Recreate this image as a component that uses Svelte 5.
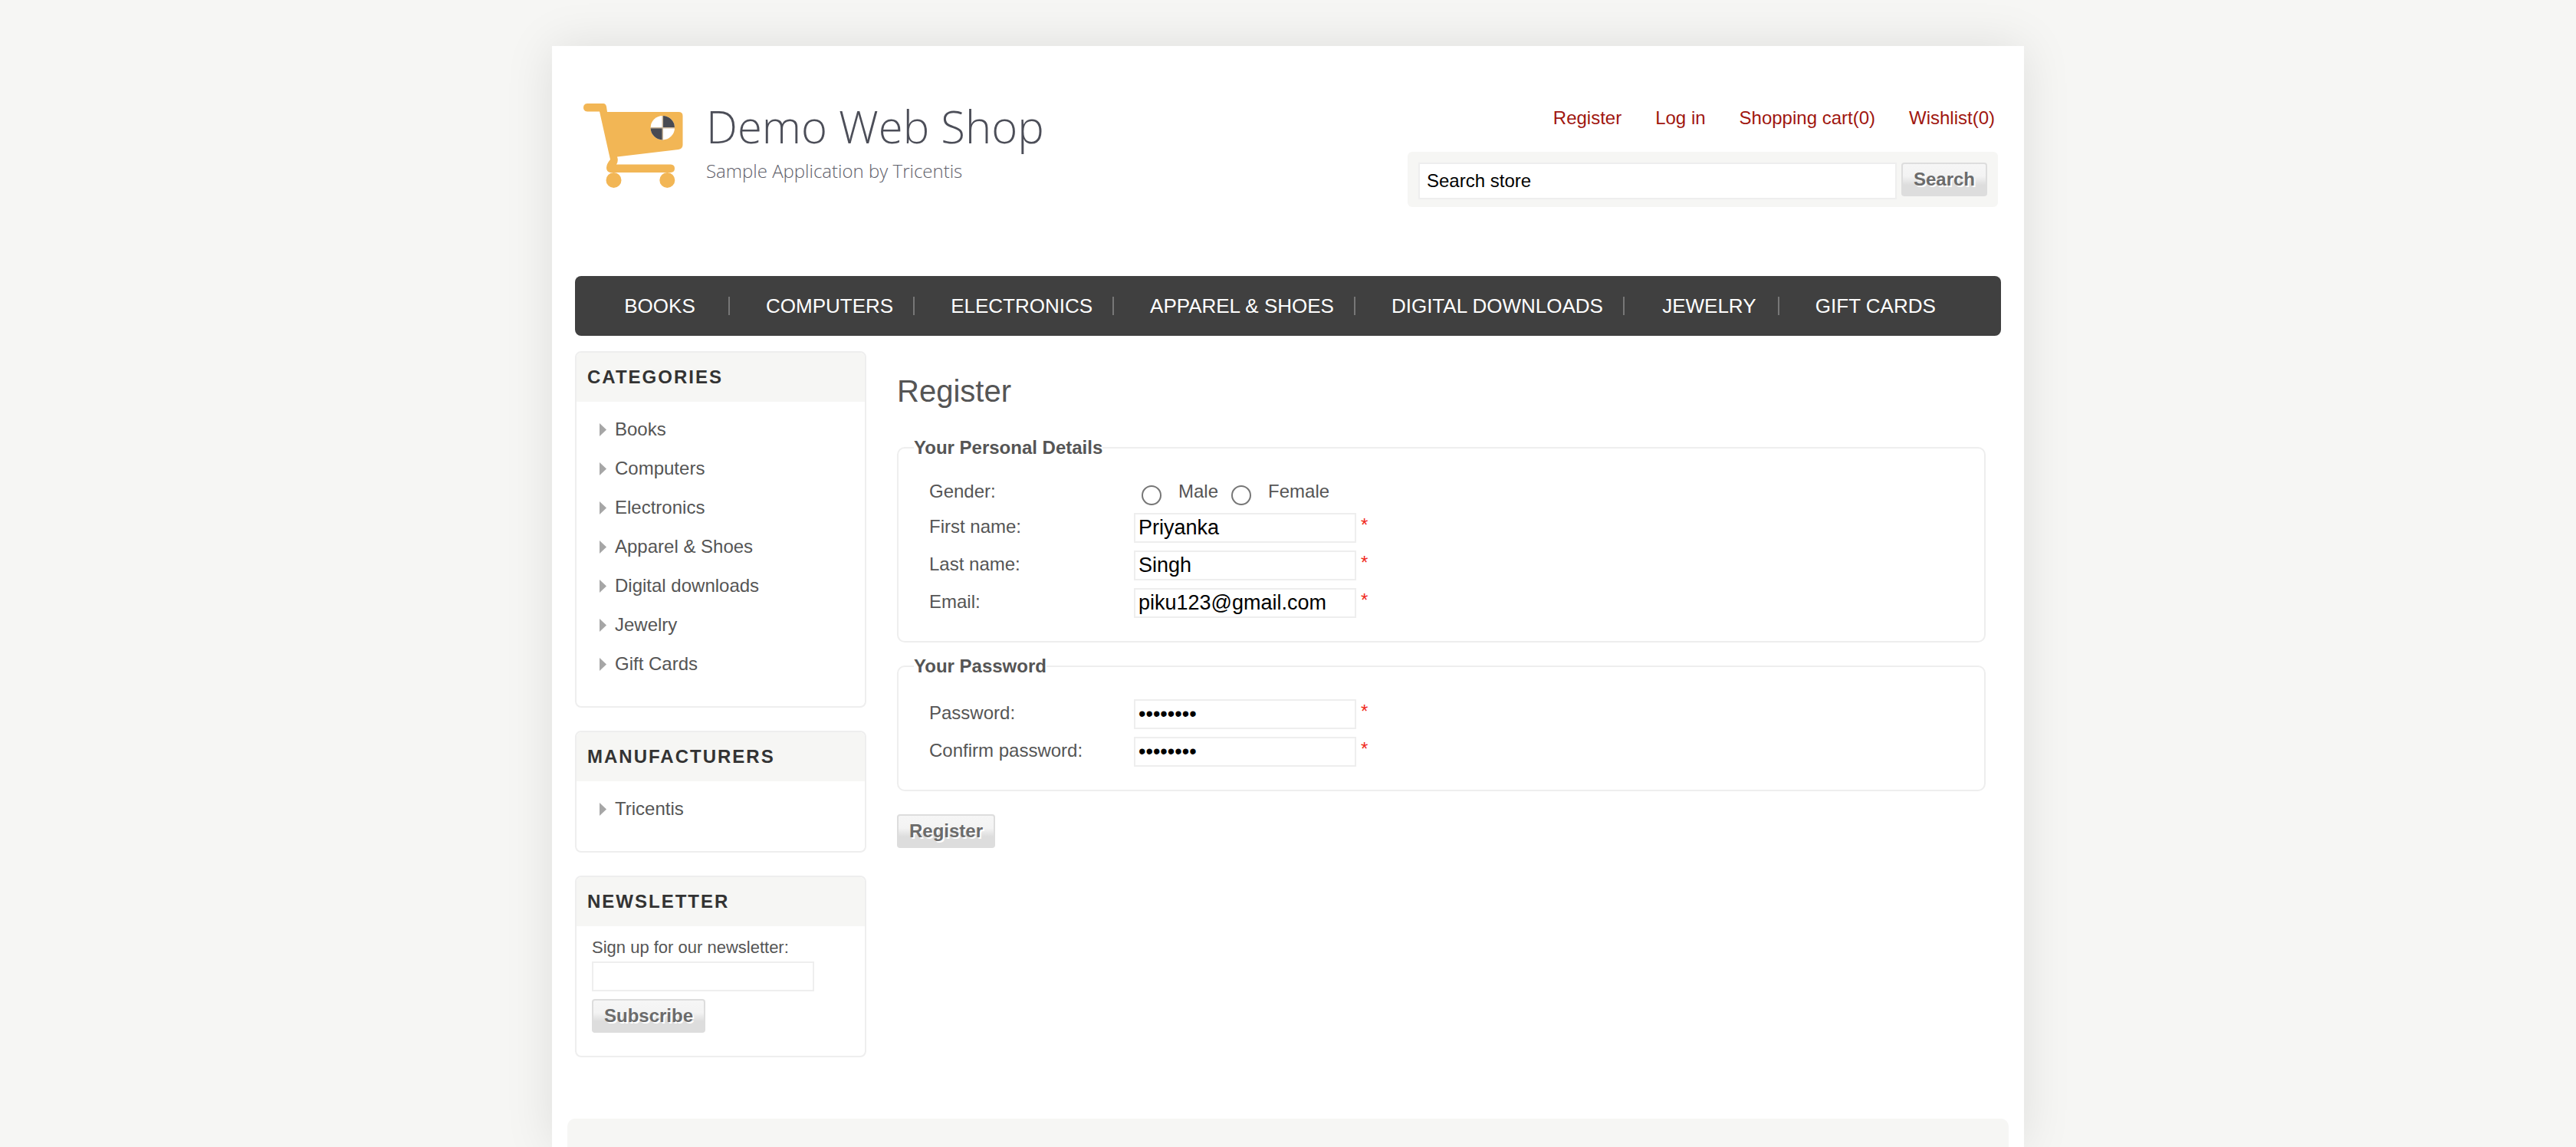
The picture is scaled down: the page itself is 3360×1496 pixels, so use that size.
<script>
  const headerLinks = ['Register', 'Log in', 'Shopping cart(0)', 'Wishlist(0)'];
  const categories = ['Books', 'Computers', 'Electronics', 'Apparel & Shoes', 'Digital downloads', 'Jewelry', 'Gift Cards'];
  const manufacturers = ['Tricentis'];
  const blocks = [
    { title: 'Categories', items: categories },
    { title: 'Manufacturers', items: manufacturers }
  ];

  let search = $state('Search store');
  let newsletter = $state('');
  let gender = $state('');
  let personal = $state([
    { id: 'first-name', label: 'First name:', type: 'text', value: 'Priyanka' },
    { id: 'last-name', label: 'Last name:', type: 'text', value: 'Singh' },
    { id: 'email', label: 'Email:', type: 'text', value: 'piku123@gmail.com' }
  ]);
  let passwords = $state([
    { id: 'password', label: 'Password:', type: 'password', value: 'password' },
    { id: 'confirm-password', label: 'Confirm password:', type: 'password', value: 'password' }
  ]);
</script>

{#snippet field(f)}
  <div class="row">
    <label for={f.id}>{f.label}</label>
    <div class="control">
      <input class="text" id={f.id} type={f.type} value={f.value} oninput={(e) => (f.value = e.currentTarget.value)} />
      <span class="required">*</span>
    </div>
  </div>
{/snippet}

<div class="page">
  <header>
    <a class="logo" href="#home">
      <svg width="130" height="111" viewBox="0 0 130 111" aria-hidden="true">
        <g fill="#f2b655">
          <path d="M5 0H26Q29 0 30 4L31 11H124Q129.500 11 129.500 16V54Q129.500 59 124 60L44 69.500Q46 75 43 79.500H114Q119 80 119 84.700T114 90H35Q30 89 30 84Q30 79 35 73L21 10.500H5Q0 10 0 5.250T5 0Z" />
          <circle cx="39.500" cy="100" r="10" />
          <circle cx="109.300" cy="100" r="10" />
        </g>
        <circle cx="103.300" cy="31.700" r="15.700" fill="#fff" />
        <path d="M103.300 31.700V16A15.700 15.700 0 0 1 119 31.700ZM103.300 31.700V47.400A15.700 15.700 0 0 1 87.600 31.700Z" fill="#484a52" />
        <path d="M103.300 16V47.400M87.600 31.700H119" stroke="#c9b69c" stroke-width="1.500" />
      </svg>
      <span class="brand">
        <span class="brand-name">Demo Web Shop</span>
        <span class="brand-sub">Sample Application by Tricentis</span>
      </span>
    </a>
    <div class="tools">
      <ul class="links">
        {#each headerLinks as link}
          <li><a href="#{link}">{link}</a></li>
        {/each}
      </ul>
      <form class="search" onsubmit={(e) => e.preventDefault()}>
        <input type="text" aria-label="Search store" bind:value={search} />
        <button class="btn">Search</button>
      </form>
    </div>
  </header>

  <nav>
    <ul>
      {#each categories as c}
        <li><a href="#{c}">{c}</a></li>
      {/each}
    </ul>
  </nav>

  <div class="body">
    <aside>
      {#each blocks as block}
        <section class="block">
          <h2>{block.title}</h2>
          <ul>
            {#each block.items as item}
              <li>
                <svg width="9" height="17" viewBox="0 0 9 17" aria-hidden="true"><path d="M0 0L9 8.500L0 17Z" fill="#a6a6a6" /></svg>
                <a href="#{item}">{item}</a>
              </li>
            {/each}
          </ul>
        </section>
      {/each}
      <section class="block">
        <h2>Newsletter</h2>
        <form class="newsletter" onsubmit={(e) => e.preventDefault()}>
          <label for="newsletter">Sign up for our newsletter:</label>
          <input class="text" id="newsletter" type="text" bind:value={newsletter} />
          <button class="btn">Subscribe</button>
        </form>
      </section>
    </aside>

    <main>
      <h1>Register</h1>
      <form onsubmit={(e) => e.preventDefault()}>
        <fieldset>
          <legend>Your Personal Details</legend>
          <div class="rows">
            <div class="row gender" role="radiogroup" aria-labelledby="gender-label">
              <span id="gender-label">Gender:</span>
              <div class="options">
                <input id="male" type="radio" name="gender" value="M" bind:group={gender} />
                <label for="male">Male</label>
                <input id="female" type="radio" name="gender" value="F" bind:group={gender} />
                <label for="female">Female</label>
              </div>
            </div>
            {#each personal as f}
              {@render field(f)}
            {/each}
          </div>
        </fieldset>
        <fieldset>
          <legend>Your Password</legend>
          <div class="rows">
            {#each passwords as f}
              {@render field(f)}
            {/each}
          </div>
        </fieldset>
        <div class="actions"><button class="btn">Register</button></div>
      </form>
    </main>
  </div>

  <footer></footer>
</div>

<style>
  :global(body) {
    background: #f6f6f4;
    color: #555;
    font: 24px/28px "Liberation Sans", Arial, sans-serif;
  }
  :global(#app) {
    display: flow-root;
  }
  .page, .page * {
    box-sizing: border-box;
  }
  ul {
    list-style: none;
    margin: 0;
    padding: 0;
  }
  a {
    color: inherit;
    text-decoration: none;
  }
  input, button {
    font-family: inherit;
  }
  .page {
    display: flex;
    flex-direction: column;
    max-width: 1920px;
    min-height: calc(100vh - 60px);
    margin: 60px auto 0;
    padding: 0 30px;
    background: #fff;
    box-shadow: 0 0 60px rgba(0, 0, 0, 0.1);
  }

  header {
    display: flex;
    justify-content: space-between;
    height: 300px;
    padding: 75px 4px 0 11px;
  }
  .logo {
    display: flex;
    align-items: flex-start;
    gap: 30px;
  }
  .brand {
    display: flex;
    flex-direction: column;
    gap: 10px;
    color: #4c4e58;
    font-family: "Open Sans", sans-serif;
    font-weight: 300;
    white-space: nowrap;
  }
  .brand-name {
    font-size: 58px;
    line-height: 60px;
  }
  .brand-sub {
    font-size: 24px;
    line-height: 36px;
    color: #5f616b;
  }
  .tools {
    display: flex;
    flex-direction: column;
    gap: 30px;
    width: 770px;
    padding-top: 5px;
  }
  .links {
    display: flex;
    justify-content: flex-end;
    gap: 44px;
    padding-right: 4px;
    color: #a0160f;
  }
  .search {
    display: flex;
    gap: 6px;
    height: 72px;
    padding: 14px;
    border-radius: 6px;
    background: #f6f6f4;
  }
  .search input {
    flex: 1;
    min-width: 0;
    height: 48px;
    padding: 0 9px;
    border: 2px solid #eee;
    background: #fff;
    color: #000;
    font-size: 24px;
  }
  .btn {
    height: 44px;
    padding: 0 14px;
    border: 2px solid #ddd;
    border-radius: 4px;
    background: linear-gradient(#f6f6f6 0%, #f3f3f3 40%, #ddd 68%, #ddd 100%);
    color: #6b6b6b;
    font-size: 24px;
    font-weight: bold;
    text-shadow: 2px 2px 0 #fff;
  }

  nav {
    padding: 27px 0;
    border-radius: 8px;
    background: #404040;
  }
  nav ul {
    display: flex;
    flex-wrap: wrap;
  }
  nav li {
    min-width: 202px;
    padding: 0 26px 0 47px;
    border-right: 2px solid #777;
    color: #fff;
    font-size: 26px;
    line-height: 24px;
    text-align: center;
    text-transform: uppercase;
  }
  nav li:last-child {
    border: 0;
  }

  .body {
    display: flex;
    gap: 40px;
    padding: 20px 0 80px;
  }
  aside {
    display: flex;
    flex-direction: column;
    gap: 30px;
    flex: 0 0 380px;
  }
  .block {
    border: 2px solid #eee;
    border-radius: 8px;
  }
  h2 {
    margin: 0;
    padding: 18px 14px;
    border-radius: 6px 6px 0 0;
    background: #f6f6f4;
    color: #333;
    font-size: 24px;
    line-height: 28px;
    letter-spacing: 2px;
    text-transform: uppercase;
  }
  .block ul {
    display: flex;
    flex-direction: column;
    gap: 23px;
    padding: 22px 20px 41px 30px;
  }
  .block li {
    display: flex;
    align-items: center;
    gap: 11px;
  }
  .newsletter {
    display: flex;
    flex-direction: column;
    align-items: flex-start;
    padding: 14px 20px 30px;
    font-size: 22px;
  }
  .newsletter .btn {
    margin-top: 10px;
  }
  .newsletter .text {
    margin-top: 4px;
  }
  .text {
    width: 290px;
    height: 39px;
    padding: 0 4px;
    border: 2px solid #eee;
    background: #fff;
    color: #000;
    font-size: 27px;
  }

  main {
    flex: 1;
    min-width: 0;
    padding: 28px 20px 0 0;
  }
  h1 {
    margin: 0 0 36px;
    font-size: 40px;
    font-weight: normal;
    line-height: 48px;
  }
  fieldset {
    margin: 0 0 17px;
    padding: 29px 40px 30px 20px;
    border: 2px solid #eee;
    border-radius: 10px;
  }
  legend {
    padding: 0;
    font-weight: bold;
  }
  .rows {
    display: flex;
    flex-direction: column;
    gap: 10px;
    padding-left: 20px;
  }
  .row {
    display: grid;
    grid-template-columns: 267px 1fr;
    height: 39px;
  }
  .row > label {
    padding-top: 4px;
  }
  .control {
    display: flex;
    gap: 6px;
  }
  .required {
    padding-top: 2px;
    color: #f02a1d;
  }
  .gender {
    height: 32px;
  }
  .options {
    display: flex;
  }
  .options input {
    appearance: none;
    width: 26px;
    height: 26px;
    margin: 6px 22px 0 10px;
    border: 2px solid #767676;
    border-radius: 50%;
    background: #fff;
  }
  .options input:checked {
    border-color: #0075ff;
    background: radial-gradient(#0075ff 0 50%, #fff 52%);
  }
  .options label + input {
    margin-left: 17px;
  }
  .actions {
    padding-top: 13px;
  }

  footer {
    flex: 1;
    margin: 0 -10px;
    border-radius: 10px 10px 0 0;
    background: #f6f6f4;
  }
</style>
